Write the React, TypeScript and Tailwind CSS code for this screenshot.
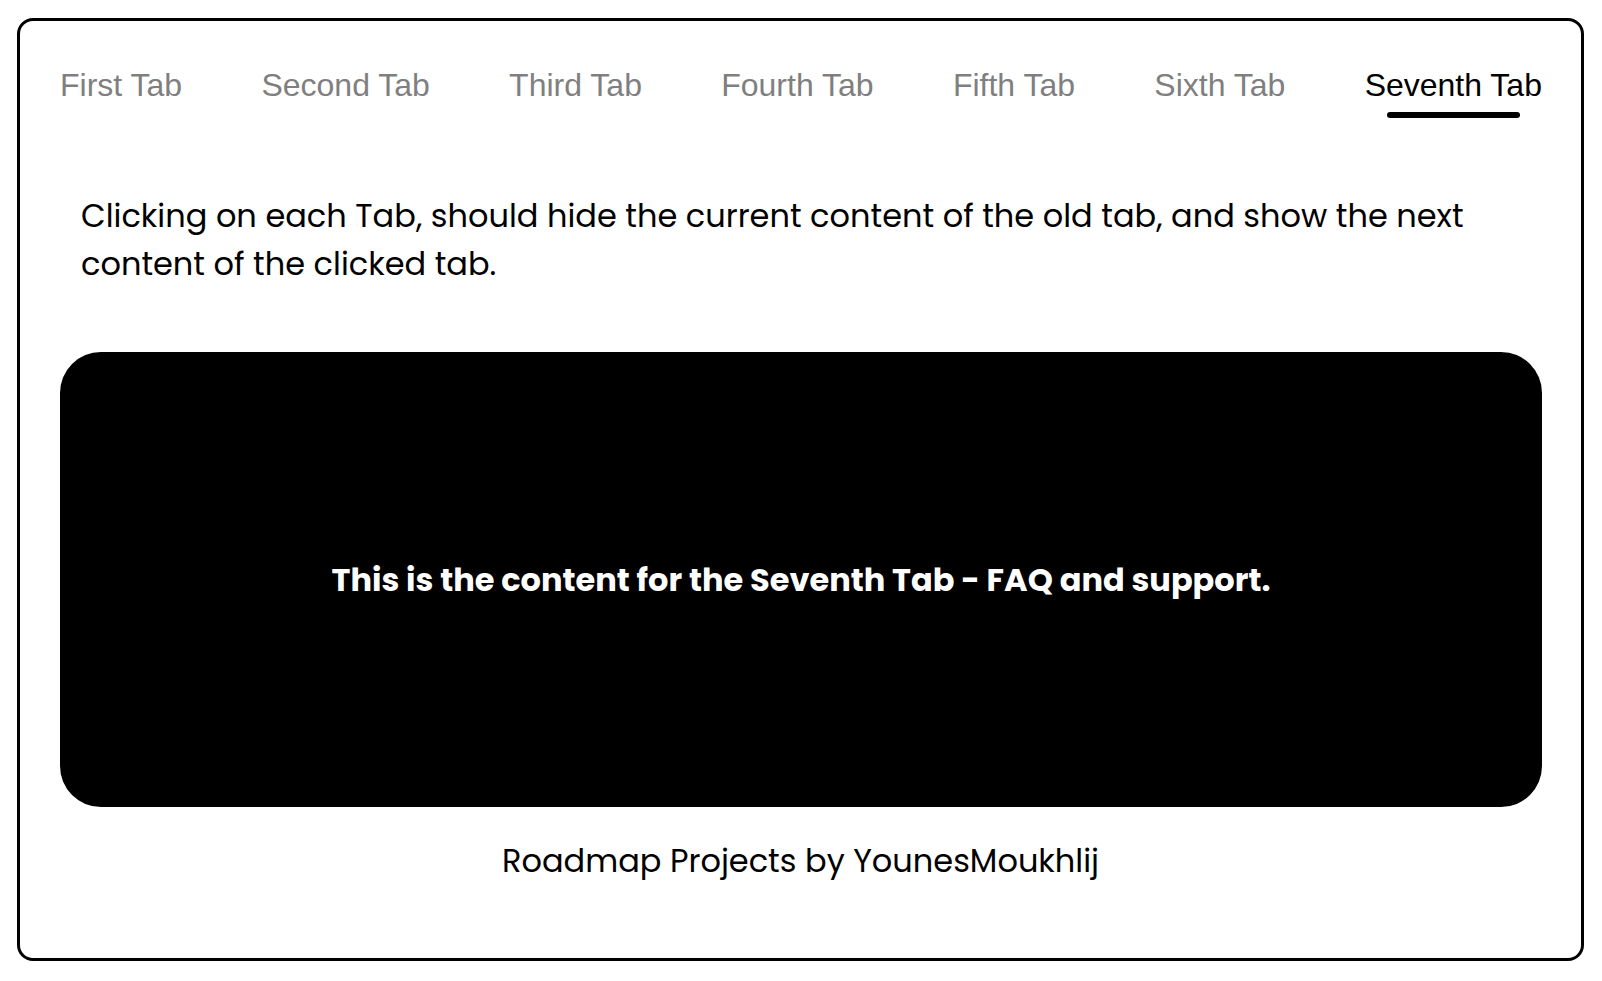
import { useState } from "react"

const tabs = [
    { name: "First Tab", content: "This is the content for the First Tab - Overview." },
    { name: "Second Tab", content: "This is the content for the Second Tab - Features." },
    { name: "Third Tab", content: "This is the content for the Third Tab - Pricing." },
    { name: "Fourth Tab", content: "This is the content for the Fourth Tab - Reviews." },
    { name: "Fifth Tab", content: "This is the content for the Fifth Tab - Team." },
    { name: "Sixth Tab", content: "This is the content for the Sixth Tab - Contact." },
    { name: "Seventh Tab", content: "This is the content for the Seventh Tab - FAQ and support." },
]

export default function App() {
    const [active, setActive] = useState(6)

    return (
        <div className="min-h-screen bg-white pt-[18px] pl-[17px] pr-[18px]">
            <div className="flex flex-col h-[943px] border-[3px] border-black rounded-2xl font-['Poppins','Inter',sans-serif]">
                <div className="flex justify-between pt-[46px] pl-[40px] pr-[39px]">
                    {tabs.map((tab, i) => (
                        <button
                            key={tab.name}
                            onClick={() => setActive(i)}
                            className="flex flex-col items-center cursor-pointer"
                        >
                            <span
                                className={
                                    "font-['Liberation_Sans',Arial,sans-serif] text-[32px] leading-[37px] " +
                                    (i === active ? "text-black" : "text-[#7f7f7f]")
                                }
                            >
                                {tab.name}
                            </span>
                            <span
                                className={
                                    "mt-[8px] h-[6px] w-3/4 rounded-full " +
                                    (i === active ? "bg-black" : "bg-transparent")
                                }
                            />
                        </button>
                    ))}
                </div>

                <p className="mt-[74px] pl-[61px] pr-[58px] text-[32px] leading-[48px] text-black">
                    Clicking on each Tab, should hide the current content of the old tab, and show the next content of the clicked tab.
                </p>

                <div className="mt-[64px] ml-[40px] mr-[39px] h-[455px] flex items-center justify-center bg-black rounded-[41px]">
                    <p className="text-white font-bold text-[32px]">{tabs[active].content}</p>
                </div>

                <p className="mt-[30px] text-center text-[32px] leading-[48px] text-black">
                    Roadmap Projects by YounesMoukhlij
                </p>
            </div>
        </div>
    )
}
